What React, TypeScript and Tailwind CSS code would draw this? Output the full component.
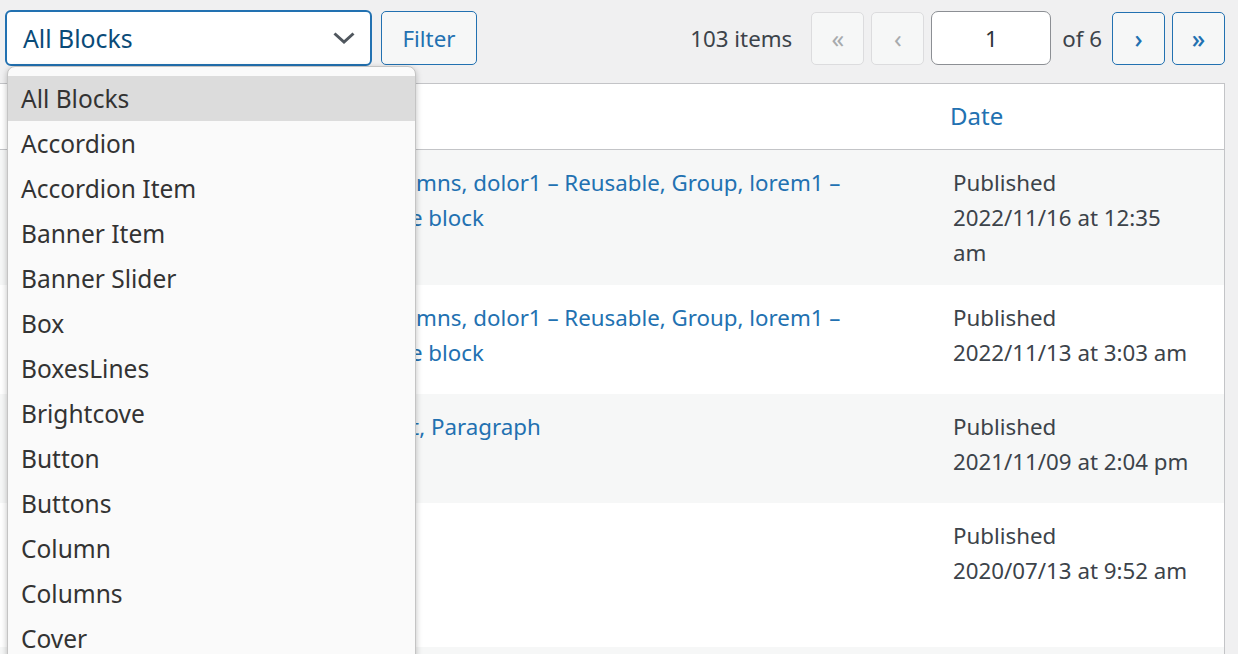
import React from "react";

const blockOptions = [
  "All Blocks",
  "Accordion",
  "Accordion Item",
  "Banner Item",
  "Banner Slider",
  "Box",
  "BoxesLines",
  "Brightcove",
  "Button",
  "Buttons",
  "Column",
  "Columns",
  "Cover",
];

type Row = {
  h: string;
  bg: string;
  lines: React.ReactNode[];
  date: string[];
};

const sep = <span>, </span>;

const rows: Row[] = [
  {
    h: "h-[135px]",
    bg: "bg-[#f6f7f7]",
    lines: [
      <div key="a" className="-ml-[47px]">
        <a>Columns</a>
        {sep}
        <a>dolor1 – Reusable</a>
        {sep}
        <a>Group</a>
        {sep}
        <a>lorem1 –</a>
      </div>,
      <div key="b" className="-ml-[89px]">Reusable block</div>,
    ],
    date: ["Published", "2022/11/16 at 12:35", "am"],
  },
  {
    h: "h-[109px]",
    bg: "bg-white",
    lines: [
      <div key="a" className="-ml-[47px]">
        <a>Columns</a>
        {sep}
        <a>dolor1 – Reusable</a>
        {sep}
        <a>Group</a>
        {sep}
        <a>lorem1 –</a>
      </div>,
      <div key="b" className="-ml-[89px]">Reusable block</div>,
    ],
    date: ["Published", "2022/11/13 at 3:03 am"],
  },
  {
    h: "h-[109px]",
    bg: "bg-[#f6f7f7]",
    lines: [
      <div key="a" className="-ml-[33px]">
        <a>List</a>
        {sep}
        <a>Paragraph</a>
      </div>,
    ],
    date: ["Published", "2021/11/09 at 2:04 pm"],
  },
  {
    h: "h-[144px]",
    bg: "bg-white",
    lines: [],
    date: ["Published", "2020/07/13 at 9:52 am"],
  },
  {
    h: "h-[110px]",
    bg: "bg-[#f6f7f7]",
    lines: [],
    date: [],
  },
];

function PageButton({ label, disabled }: { label: string; disabled?: boolean }) {
  return (
    <span
      className={
        disabled
          ? "flex h-[53px] w-[53px] items-center justify-center rounded-[5px] border border-[#dcdcde] bg-[#f6f7f7] text-[25px] text-[#a7aaad]"
          : "flex h-[53px] w-[53px] items-center justify-center rounded-[5px] border border-[#2271b1] bg-[#f6f7f7] text-[25px] font-medium text-[#2271b1]"
      }
    >
      {label}
    </span>
  );
}

export default function App() {
  return (
    <div className="relative h-screen overflow-hidden bg-[#f0f0f1] font-['Noto_Sans',sans-serif] text-[22.3px] leading-[35px] text-[#3c434a]">
      {/* toolbar */}
      <div className="flex items-center pl-[5px] pr-[13px] pt-[10px]">
        <div className="relative">
          <div className="flex h-[56px] w-[367px] items-center justify-between rounded-[6px] border-2 border-[#2271b1] bg-white pl-[16px] pr-[14px] text-[24.8px] text-[#0a4b78]">
            <span>All Blocks</span>
            <svg width="22" height="12" viewBox="0 0 22 12" fill="none" className="mr-[1px]">
              <path d="M1.5 1.5 L11 10 L20.5 1.5" stroke="#50575e" strokeWidth="3" />
            </svg>
          </div>
          {/* open dropdown */}
          <div className="absolute left-[2px] top-[56px] z-10 w-[409px] rounded-t-[8px] border border-[#c4c4c4] bg-[#fafafa] pt-[9px] shadow-[0_2px_6px_rgba(0,0,0,0.25)]">
            {blockOptions.map((o, i) => (
              <div
                key={o}
                className={
                  i === 0
                    ? "flex h-[45px] items-center bg-[#dcdcdc] pl-[13px] text-[24.5px] text-[#333333]"
                    : "flex h-[45px] items-center pl-[13px] text-[24.5px] text-[#333333]"
                }
              >
                {o}
              </div>
            ))}
          </div>
        </div>
        <button className="ml-[9px] flex h-[54px] w-[96px] items-center justify-center rounded-[5px] border border-[#2271b1] bg-[#f6f7f7] text-[#2271b1]">
          Filter
        </button>
        <div className="flex-1" />
        <span className="mr-[19px]">103 items</span>
        <div className="flex items-center">
          <PageButton label="«" disabled />
          <span className="ml-[7px]">
            <PageButton label="‹" disabled />
          </span>
          <div className="ml-[7px] flex h-[54px] w-[120px] items-center justify-center rounded-[7px] border border-[#8c8f94] bg-white text-[#2c3338]">
            1
          </div>
          <span className="ml-[11px] mr-[10px]">of 6</span>
          <PageButton label="›" />
          <span className="ml-[7px]">
            <PageButton label="»" />
          </span>
        </div>
      </div>

      {/* table */}
      <div className="mr-[13px] mt-[17px] border-r border-t border-[#c3c4c7] bg-white">
        <div className="flex h-[66px] border-b border-[#c3c4c7]">
          <div className="w-[935px]" />
          <div className="flex flex-1 items-center pl-[15px] pb-[2px] text-[24px] text-[#2271b1]">Date</div>
        </div>
        {rows.map((r, i) => (
          <div key={i} className={`flex ${r.h} ${r.bg}`}>
            <div className="w-[935px] pl-[416px] pt-[15px] text-[#2271b1]">
              <div className="whitespace-nowrap">{r.lines}</div>
            </div>
            <div className="flex-1 pl-[18px] pt-[15px]">
              {r.date.map((d) => (
                <div key={d}>{d}</div>
              ))}
            </div>
          </div>
        ))}
      </div>
    </div>
  );
}
